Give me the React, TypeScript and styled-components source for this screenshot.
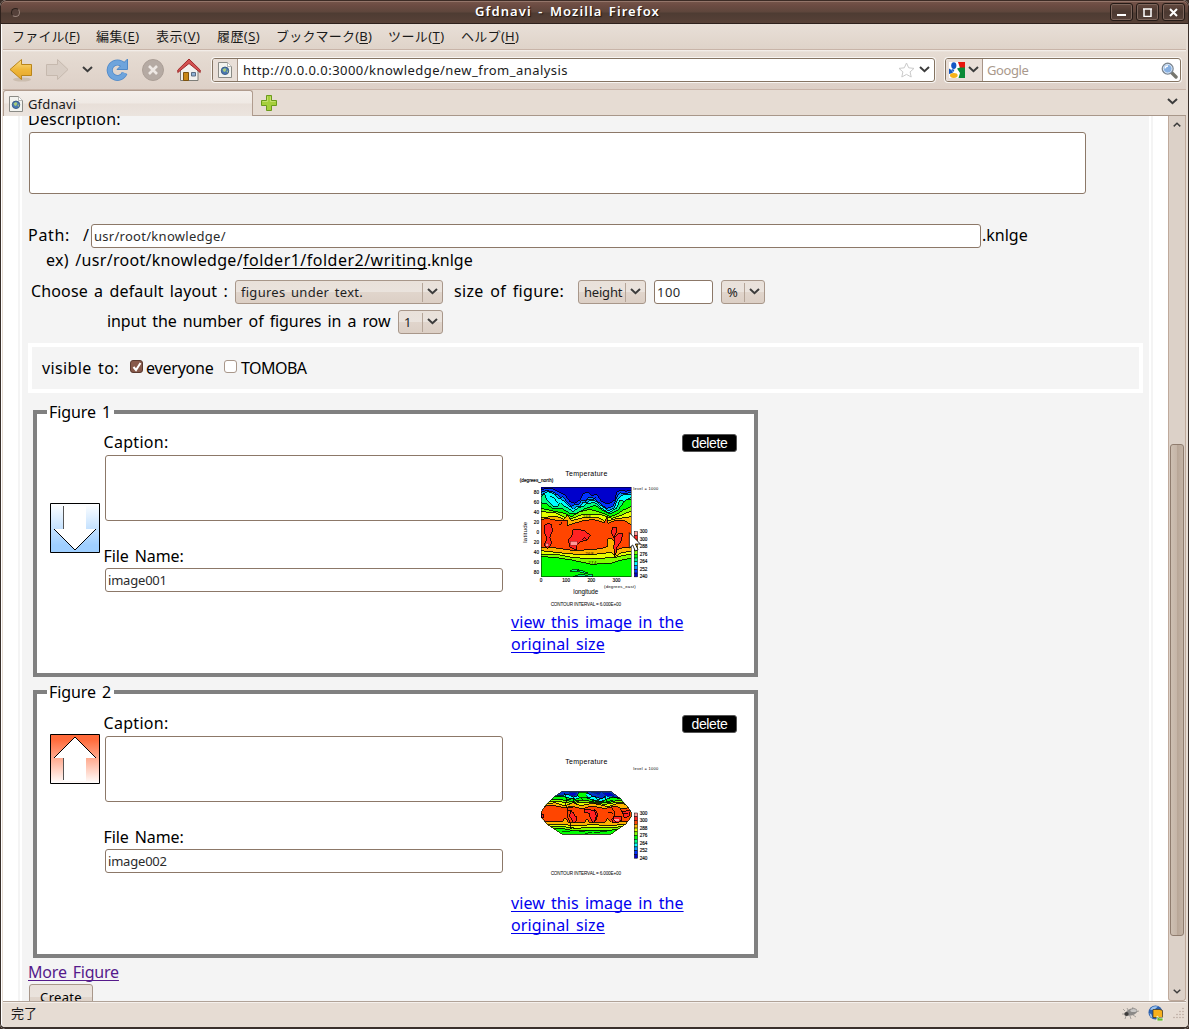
import React from "react";
import styled, { createGlobalStyle, css } from "styled-components";

const Global = createGlobalStyle`
  * { box-sizing: border-box; }
  body { margin: 0; background: #3a2d27; font-family: "Noto Sans", "Noto Sans CJK JP", sans-serif; }
`;

const FONT = '"Noto Sans", "Noto Sans CJK JP", sans-serif';

/* ---------- window frame ---------- */

const Frame = styled.div`
  width: 1189px;
  height: 1029px;
  display: flex;
  flex-direction: column;
  overflow: hidden;
  background: #e6dcd3;
  border-radius: 6px 6px 5px 5px;
  font-family: ${FONT};
  color: #1a1a1a;
`;

const TitleBar = styled.header`
  height: 24px;
  flex: none;
  display: grid;
  grid-template-columns: 26px 1fr 77px;
  align-items: center;
  padding: 0 3px 0 0;
  background: linear-gradient(#76564b 0, #6d4c43 4px, #5e463c 11px, #4e3c33 12px, #574137 22px);
  border: 1px solid #2e211c;
  border-top-color: #3c2b25;
  box-shadow: inset 0 1px 0 #94756a;
  border-radius: 6px 6px 0 0;
`;

const TitleDot = styled.i`
  width: 9px;
  height: 9px;
  margin-left: 10px;
  border-radius: 50%;
  background: #55413a;
  border: 1px solid #2c201b;
  border-right-color: #98847b;
  border-bottom-color: #98847b;
`;

const TitleText = styled.h1`
  margin: 0 0 2px;
  text-align: center;
  font-size: 13px;
  font-weight: 600;
  line-height: 18px;
  letter-spacing: 1.08px;
  word-spacing: 2px;
  color: #fff;
  text-shadow: 1px 1px 1px #1c120e;
`;

const WindowButtons = styled.div`
  display: flex;
  justify-content: flex-end;
  gap: 3px;
`;

const WindowButton = styled.button`
  width: 23px;
  height: 18px;
  padding: 0;
  display: grid;
  place-items: center;
  background: linear-gradient(#65493f, #4b3931 50%, #57423a);
  border: 1px solid #241a16;
  box-shadow: inset 0 0 0 1px #7d665c;
  border-radius: 3px;
`;

const Body = styled.div`
  flex: 1;
  min-height: 0;
  display: flex;
  flex-direction: column;
  border: solid #3a302b;
  border-width: 0 1px 2px 1px;
  border-radius: 0 0 5px 5px;
  box-shadow: inset 1px 0 0 #fff;
  padding: 0 2px 0 2px;
`;

/* ---------- browser chrome ---------- */

const MenuBar = styled.nav`
  height: 26px;
  flex: none;
  display: flex;
  align-items: center;
  gap: 16px;
  padding: 0 9px 1px;
  background: linear-gradient(#e8dfd7, #dfd3c9);
  border-bottom: 1px solid #c8b4a8;
`;

const MenuItem = styled.span<{ $w: number; $ls: number }>`
  width: ${(p) => p.$w}px;
  letter-spacing: ${(p) => p.$ls}px;
  font-size: 13px;
  line-height: 20px;
  white-space: nowrap;
  u { text-underline-offset: 2px; }
`;

const ToolBar = styled.div`
  height: 40px;
  flex: none;
  display: flex;
  align-items: center;
  padding: 1px 3px 0 6px;
  background: linear-gradient(#f6f2ee 0, #e6dcd3 2px, #ddd0c7);
  border-bottom: 1px solid #c8b4a8;
`;

const ToolSlot = styled.span<{ $w: number }>`
  width: ${(p) => p.$w}px;
  display: flex;
  align-items: center;
`;

const UrlBox = styled.div<{ $w: number; $ml?: number }>`
  width: ${(p) => p.$w}px;
  height: 24px;
  margin-left: ${(p) => p.$ml ?? 0}px;
  display: flex;
  align-items: center;
  overflow: hidden;
  background: #fff;
  border: 1px solid #857462;
  border-radius: 3px;
  box-shadow: 0 0 0 1px #f8f5f2;
`;

const UrlBadge = styled.span<{ $w: number }>`
  width: ${(p) => p.$w}px;
  height: 100%;
  flex: none;
  display: flex;
  align-items: center;
  justify-content: center;
  gap: 3px;
  background: #e9dfd8;
  border-right: 1px solid #a89588;
`;

const Grow = styled.span`
  flex: 1;
`;

const TabBar = styled.div`
  height: 26px;
  flex: none;
  display: flex;
  align-items: center;
  padding: 0 8px 1px 0;
  background: #e6dcd3;
  border-bottom: 1px solid #a8978a;
`;

const Tab = styled.div`
  width: 250px;
  height: 26px;
  flex: none;
  align-self: flex-start;
  display: flex;
  align-items: center;
  gap: 5px;
  padding: 0 5px;
  background: linear-gradient(#f4efeb 0, #efe9e4 12px, #e8dfd8 13px, #ebe4de);
  border: 1px solid #b09c8e;
  border-bottom: 0;
  border-radius: 3px 3px 0 0;
`;

const NewTab = styled.span`
  margin-left: 8px;
  height: 16px;
`;

const StatusBar = styled.footer`
  height: 26px;
  flex: none;
  display: flex;
  align-items: center;
  gap: 9px;
  padding: 0 1px 3px 8px;
  background: #e6dcd3;
  border-top: 1px solid #b0a297;
  box-shadow: inset 0 1px 0 #f5f0ec;
`;

/* ---------- scroll area ---------- */

const View = styled.div`
  flex: 1;
  min-height: 0;
  display: flex;
  background: #fff;
`;

const Gutter = styled.div<{ $side: "left" | "right" }>`
  width: 19px;
  flex: none;
  display: flex;
  justify-content: ${(p) => (p.$side === "left" ? "flex-end" : "flex-start")};
  padding: 0 2px;
  &::after { content: ""; width: 2px; background: #f4f4f4; }
`;

const Page = styled.main`
  flex: 1;
  min-width: 0;
  overflow: hidden;
  background: #f4f4f4;
  padding-left: 6px;
  color: #000;
`;

const ScrollBar = styled.div`
  width: 18px;
  flex: none;
  display: flex;
  flex-direction: column;
  align-items: center;
  background: #dcd1c8;
  border: 1px solid #bfaa9c;
  border-top: 0;
  border-radius: 0 0 3px 3px;
`;

const ScrollStep = styled.span`
  height: 17px;
  width: 16px;
  display: grid;
  place-items: center;
`;

const Thumb = styled.div`
  width: 14px;
  height: 492px;
  margin-top: 311px;
  margin-bottom: auto;
  background: linear-gradient(90deg, #cdbfb2, #c5b5a7 50%, #b8a697 51%, #c3b3a5);
  border: 1px solid #8f7c6e;
  border-radius: 3px;
`;

/* ---------- text and form parts ---------- */

const Text = styled.span<{ $ls?: number; $ws?: number; $w?: number; $size?: number; $color?: string; $pad?: number }>`
  display: inline-block;
  flex: none;
  ${(p) => p.$w !== undefined && css`width: ${p.$w}px;`}
  font-family: ${FONT};
  font-size: ${(p) => p.$size ?? 16}px;
  line-height: 22px;
  letter-spacing: ${(p) => p.$ls ?? 0}px;
  word-spacing: ${(p) => p.$ws ?? 2}px;
  padding-left: ${(p) => p.$pad ?? 0}px;
  color: ${(p) => p.$color ?? "inherit"};
  white-space: nowrap;
`;

const Underlined = styled(Text)`
  text-decoration: underline;
  text-decoration-skip-ink: none;
  text-decoration-thickness: 1px;
  text-underline-offset: 2px;
`;

const Row = styled.div<{ $h: number; $pl?: number; $mt?: number }>`
  height: ${(p) => p.$h}px;
  margin-top: ${(p) => p.$mt ?? 0}px;
  padding-left: ${(p) => p.$pl ?? 0}px;
  display: flex;
  align-items: center;
  > span { margin-bottom: 2px; }
`;

const fieldLook = css`
  display: block;
  flex: none;
  margin: 0;
  background: #fff;
  border: 1px solid #8c7868;
  border-radius: 3px;
  outline: none;
  resize: none;
  font-family: ${FONT};
  font-size: 13px;
  color: #2b2b2b;
`;

const Area = styled.textarea<{ $w: number; $h: number }>`
  ${fieldLook}
  width: ${(p) => p.$w}px;
  height: ${(p) => p.$h}px;
`;

const Input = styled.input<{ $w: number; $ls?: number }>`
  ${fieldLook}
  width: ${(p) => p.$w}px;
  height: 24px;
  padding: 0 2px 1px;
  letter-spacing: ${(p) => p.$ls ?? 0}px;
`;

const raised = css`
  background: linear-gradient(#e9e1da 0, #eae3dd 50%, #e0d5cc 52%, #dccfc5 100%);
  border: 1px solid #a8978a;
  border-radius: 3px;
`;

const SelectBox = styled.div<{ $w: number; $ml: number }>`
  ${raised}
  width: ${(p) => p.$w}px;
  height: 24px;
  margin-left: ${(p) => p.$ml}px;
  padding-left: 5px;
  flex: none;
  display: flex;
  align-items: center;
  justify-content: space-between;
  color: #1f1f1f;
`;

const SelectArrow = styled.span`
  width: 20px;
  height: 19px;
  display: grid;
  place-items: center;
  border-left: 1px solid #b5a598;
`;

const VisibleBox = styled.div`
  width: 1115px;
  height: 50px;
  margin-top: 9px;
  border: 4px solid #fff;
  padding-left: 10px;
  display: flex;
  align-items: center;
`;

const Check = styled.span<{ $on?: boolean; $ml: number }>`
  width: 13px;
  height: 13px;
  margin: 0 3px 3px ${(p) => p.$ml}px;
  display: grid;
  place-items: center;
  background: ${(p) => (p.$on ? "#87594a" : "#fff")};
  border: 1px solid ${(p) => (p.$on ? "#5b3a30" : "#a8978a")};
  border-radius: 3px;
`;

const FigureSet = styled.fieldset<{ $h: number; $mt: number }>`
  width: 725px;
  height: ${(p) => p.$h}px;
  margin: ${(p) => p.$mt}px 0 0 5px;
  padding: 0 17px 0 10px;
  min-width: 0;
  border: 4px solid #808080;
  background: #fff;
  legend { padding: 0 2px; height: 22px; width: 67px; line-height: 22px; display: flex; }
`;

const FigureGrid = styled.div<{ $pt: number }>`
  display: grid;
  grid-template-columns: 50px 398px 1fr;
  column-gap: 5px;
  padding: ${(p) => p.$pt}px 0 0 3px;
`;

const ArrowSlot = styled.div<{ $mt: number }>`
  margin-top: ${(p) => p.$mt}px;
  height: 50px;
`;

const FieldColumn = styled.div`
  display: flex;
  flex-direction: column;
  padding-top: 8px;
  ${Text} { margin-left: -1.5px; }
`;

const Space = styled.div<{ $h: number }>`
  height: ${(p) => p.$h}px;
`;

const PlotColumn = styled.div`
  display: flex;
  flex-direction: column;
  padding: 11px 0 0 3px;
`;

const DeleteButton = styled.button`
  align-self: flex-end;
  width: 55px;
  height: 18px;
  padding: 1px 0 0;
  background: #000;
  color: #fff;
  border: 1px solid #555;
  border-radius: 3px;
  font: 14px/15px "Liberation Sans", Arial, sans-serif;
  letter-spacing: -0.35px;
`;

const PlotSlot = styled.div`
  height: 150px;
  margin-top: 8px;
`;

const PlotLink = styled.a`
  display: flex;
  flex-direction: column;
  margin-top: 1px;
  color: #0000ee;
`;

const CreateButton = styled.button`
  ${raised}
  width: 64px;
  height: 25px;
  margin: 0 0 0 1px;
  padding: 0;
  display: block;
  text-align: center;
`;

/* ---------- icons ---------- */

const Chevron = ({ w = 11, c = "#3c3c3c", up = false }: { w?: number; c?: string; up?: boolean }) => (
  <svg width={w} height={w * 0.64} viewBox="0 0 11 7">
    <path d={up ? "M1 6 5.5 1.8 10 6" : "M1 1 5.5 5.2 10 1"} fill="none" stroke={c} strokeWidth="2" />
  </svg>
);

const PageIcon = () => (
  <svg width="14" height="16" viewBox="0 0 14 16">
    <path d="M.5.5h9l4 4v11H.5z" fill="#f3f3ef" stroke="#8b8b86" />
    <path d="M9.5.5v4h4" fill="#fff" stroke="#a5a5a0" strokeWidth=".8" />
    <circle cx="7" cy="8.8" r="3.8" fill="#4a78b4" stroke="#2f5078" strokeWidth=".8" />
    <path d="M4.500 7.500 7 6l1.500 1.500L7 10 5.500 9.500zM8.500 9l1.700-.4-.8 2.400z" fill="#a9cc78" />
  </svg>
);

const ArrowIcon = ({ back }: { back?: boolean }) => (
  <svg width="24" height="24" viewBox="0 0 24 24">
    <defs>
      <linearGradient id="gold" x2="0" y2="1">
        <stop offset="0" stopColor="#fbe08a" />
        <stop offset=".5" stopColor="#efb73a" />
        <stop offset="1" stopColor="#e5a52a" />
      </linearGradient>
    </defs>
    {back && <ellipse cx="13" cy="21.500" rx="9" ry="2" fill="#b8a793" opacity=".5" />}
    <path
      d={back ? "M1 11.500 12.500 1.500v5h10v11h-10v4z" : "M23 11.500 12.500 1.500v5h-11v11h11v4z"}
      fill={back ? "url(#gold)" : "#d8cdc4"}
      stroke={back ? "#b9851a" : "#c6b9ae"}
      strokeLinejoin="round"
    />
  </svg>
);

const ReloadIcon = () => (
  <svg width="23" height="24" viewBox="0 0 23 24">
    <path d="M17.300 7.200A7.700 7.700 0 1 0 18.600 15" fill="none" stroke="#5089c8" strokeWidth="6" />
    <path d="M21.500 1v10.500H11l4-4z" fill="#6ea4dc" stroke="#5089c8" strokeLinejoin="round" />
    <path d="M17.300 7.200A7.700 7.700 0 1 0 18.600 15" fill="none" stroke="#6ea4dc" strokeWidth="4.400" />
  </svg>
);

const StopIcon = () => (
  <svg width="22" height="22" viewBox="0 0 22 22">
    <circle cx="11" cy="11" r="10.500" fill="#b5aaa3" stroke="#aa9e96" />
    <path d="m7 7 8 8m0-8-8 8" stroke="#eee8e4" strokeWidth="2.600" />
  </svg>
);

const HomeIcon = () => (
  <svg width="24" height="24" viewBox="0 0 24 24">
    <path d="M3.500 11v11.500h17.500V11l-9-7z" fill="#f2f1ee" stroke="#7d7d78" />
    <path d="M12 1 .8 12v2.500L12 5.500l11.200 9V12z" fill="#d35151" stroke="#a02c2c" strokeLinejoin="round" />
    <path d="M6.500 14.500h5v8h-5z" fill="#c98818" stroke="#7c5410" />
    <path d="M14.500 14.500h4v3.500h-4z" fill="#8fb2d6" stroke="#5a6e84" />
  </svg>
);

const StarIcon = () => (
  <svg width="17" height="16" viewBox="0 0 17 16">
    <path d="m8.500 1 2.200 4.800 5.300.6-3.900 3.500 1.100 5.100-4.700-2.600L3.800 15l1.100-5.100L1 6.400l5.300-.6z" fill="#fff" stroke="#c9c9c9" strokeLinejoin="round" />
  </svg>
);

const GoogleIcon = () => (
  <svg width="16" height="16" viewBox="0 0 16 16">
    <path d="M0 0h16v16H0z" fill="#fff" />
    <path d="M9 0h7v6H11z" fill="#e8150c" />
    <path d="M8 6.500 11 5.500h5V16H9.500l1.500-5z" fill="#0b8a36" />
    <path d="M0 6.500 2.500 8 4 10.500l-2 1L0 12z" fill="#1357c4" />
    <path d="m2.500 7 3 .8L4 10.500z" fill="#1357c4" />
    <ellipse cx="4.800" cy="3.600" rx="2.600" ry="3.400" fill="#1357c4" />
    <ellipse cx="4.800" cy="13.500" rx="3.800" ry="2.400" fill="#f6b31a" />
  </svg>
);

const SearchIcon = () => (
  <svg width="17" height="17" viewBox="0 0 17 17">
    <path d="m10 10 5 5" stroke="#77776f" strokeWidth="3.400" strokeLinecap="round" />
    <circle cx="6.700" cy="6.700" r="5.400" fill="#87b0e2" stroke="#7e8790" strokeWidth="1.400" />
    <circle cx="6.700" cy="6.700" r="4.300" fill="none" stroke="#dfeaf7" />
    <path d="M4 6.500A3 3 0 0 1 7 4" fill="none" stroke="#fff" strokeWidth="1.300" />
  </svg>
);

const PlusIcon = () => (
  <svg width="16" height="16" viewBox="0 0 16 16">
    <path d="M5.500.5h5v5h5v5h-5v5h-5v-5h-5v-5h5z" fill="#a5cf3c" stroke="#6b9a1c" strokeLinejoin="round" />
    <path d="M6.500 1.500v5h-5M9.500 1.500v5h5" fill="none" stroke="#c3e06a" />
  </svg>
);

const BugIcon = () => (
  <svg width="17" height="14" viewBox="0 0 17 14">
    <path d="M3 5 1 3m2 5H0m4 2-1 3m5-3 1 3m2-4 3 2M6 4 5 2m5 2 1-3m2 5 4-1" stroke="#94908c" strokeWidth=".8" fill="none" />
    <ellipse cx="9.500" cy="6" rx="6" ry="3.500" transform="rotate(-18 9.500 6)" fill="#8b8987" />
    <ellipse cx="11.500" cy="4.500" rx="3.200" ry="1.600" fill="#c8c6c4" />
    <ellipse cx="4.500" cy="8" rx="2.200" ry="2" fill="#3d3b3a" />
  </svg>
);

const GlobeIcon = () => (
  <svg width="16" height="16" viewBox="0 0 16 16">
    <circle cx="7.500" cy="7.500" r="7" fill="#2a5fae" />
    <path d="M2 4.500Q5 0 10 1.500L7 4 4 5zM1.500 8 3.500 9.500l1 3.500-2-1z" fill="#9cc4ee" />
    <path d="M5 4.500h7l2.500 1v7H5z" fill="#f6b01c" stroke="#3b3322" strokeWidth=".7" />
    <path d="m9 11 2.500 2H15v3H9z" fill="#67b52c" stroke="#fff" strokeWidth=".7" />
  </svg>
);

const Grip = () => (
  <svg width="12" height="12" viewBox="0 0 12 12" fill="#b9aa9e">
    {[[10, 2], [7, 5], [10, 5], [4, 8], [7, 8], [10, 8], [1, 11], [4, 11], [7, 11], [10, 11]].map(([x, y]) => (
      <circle key={`${x}-${y}`} cx={x} cy={y - 0.5} r=".8" />
    ))}
  </svg>
);

const MoveIcon = ({ up }: { up?: boolean }) => {
  const id = up ? "moveUp" : "moveDown";
  return (
    <svg width="50" height="50" viewBox="0 0 50 50">
      <defs>
        <linearGradient id={id} x2="0" y2="1">
          <stop offset={up ? 0.1 : 0} stopColor={up ? "#ff6a3a" : "#fff"} />
          <stop offset={up ? 1 : 0.85} stopColor={up ? "#fff" : "#9fcfff"} />
        </linearGradient>
      </defs>
      <path d="M.5.5h49v49H.5z" fill={`url(#${id})`} stroke="#000" />
      {up ? (
        <g>
          <path d="M13.500 46V24H4L25 3l21 21H36v23H13z" fill="#fff" />
          <path d="M4 24 25 3l21 21" fill="none" stroke="#000" />
          <path d="M13.500 24v22" stroke="#555" />
        </g>
      ) : (
        <g>
          <path d="M13.500 3H36v23h10L25 47 4 26h9.500z" fill="#fff" />
          <path d="M4 26 25 47l21-21" fill="none" stroke="#000" />
          <path d="M13.500 3v23" stroke="#555" />
        </g>
      )}
    </svg>
  );
};

/* ---------- temperature plots ---------- */

const BANDS: [string, string][] = [
  ["#0033ff", "108,88 140,84 160,95 180,105 195,125 210,130 225,120 235,100 250,97 262,108 275,102 290,125 310,132 330,120 335,96 350,90 362,94 378,90"],
  ["#0099ff", "108,97 125,91 150,98 165,112 175,110 185,125 200,140 210,132 220,136 230,120 240,122 250,112 265,114 275,122 285,130 305,146 325,138 335,112 345,98 360,102 378,96"],
  ["#00ffff", "108,104 130,95 150,103 158,114 170,118 190,135 205,148 215,138 225,141 235,126 245,128 258,118 270,122 290,138 310,152 328,143 338,118 355,103 378,105"],
  ["#00ff80", "108,112 118,98 124,118 145,140 158,138 166,128 176,138 190,145 205,156 220,142 235,140 245,130 270,128 290,145 310,158 335,145 345,120 358,124 378,112"],
  ["#00ff00", "108,128 125,132 145,147 170,145 195,160 215,160 240,146 270,136 295,152 315,162 340,150 350,135 362,120 378,118"],
  ["#80ff00", "108,145 140,152 180,160 200,170 225,155 255,148 290,158 318,170 340,160 355,150 378,140"],
  ["#e6ff00", "108,155 150,158 180,172 200,176 230,164 290,165 320,175 350,165 378,153"],
  ["#ffb300", "108,174 150,168 178,178 186,165 200,182 230,174 280,173 300,184 325,178 378,170"],
  ["#ff4500", "108,180 125,175 150,180 186,180 186,197 230,183 265,178 297,188 306,172 308,190 335,180 360,182 378,195"],
  ["#ffb300", "108,262 140,262 180,268 210,272 290,266 306,260 308,238 318,234 328,243 328,288 335,270 350,264 378,262"],
  ["#e6ff00", "108,272 180,280 240,285 300,280 318,276 330,290 350,278 378,274"],
  ["#80ff00", "108,282 160,284 200,292 250,296 300,294 330,292 378,282"],
  ["#00ff00", "108,290 150,292 200,300 260,313 320,309 350,300 378,295"],
];

const HOT = [
  "118,196 128,190 140,194 142,215 134,232 140,250 128,266 118,255 126,235 117,215",
  "190,240 202,225 203,210 220,208 240,213 256,226 246,240 224,246 214,258 216,270 195,262",
  "322,203 335,203 334,215 328,232 340,222 352,220 350,240 336,262 332,286 326,262 330,240 320,220",
];

const SCALE = ["#ff9999", "#ff2222", "#ff4500", "#ffb300", "#e6ff00", "#80ff00", "#00ff00", "#00ff80", "#00ffff", "#0099ff", "#0033ff", "#0000cc"];

const PlotText = styled.text<{ $s: number }>`
  font-family: "Liberation Sans", Arial, sans-serif;
  font-size: ${(p) => p.$s}px;
  fill: #000;
`;

const Scale = ({ y }: { y: number }) => (
  <g>
    {SCALE.map((c, i) => (
      <rect key={c} x="388" y={y + i * 11.3} width="10" height="11.3" fill={c} stroke="#000" strokeWidth="1.500" />
    ))}
    {["300", "300", "288", "276", "264", "252", "240"].map((t, i) => (
      <PlotText key={i} $s={14} x="404" y={y + 5 + i * 22.500} textLength="23" stroke="#000" strokeWidth=".4">{t}</PlotText>
    ))}
  </g>
);

const Cursor = () => (
  <path d="M373 218v46l10-9 8 18 8-4-8-17h15z" fill="#fff" stroke="#000" strokeWidth="2.500" />
);

const FlatPlot = () => (
  <svg width="170" height="150" viewBox="18 0 510 450">
    <PlotText $s={21} x="181" y="49" textLength="126">Temperature</PlotText>
    <PlotText $s={14} x="44" y="66" textLength="101" stroke="#000" strokeWidth=".4">(degrees_north)</PlotText>
    <PlotText $s={12} x="385" y="89" textLength="75">level = 1000</PlotText>
    <g shapeRendering="crispEdges">
      <rect x="108" y="82" width="270" height="268" fill="#0000cc" />
      {BANDS.map(([c, pts], i) => (
        <g key={i}>
          <polygon points={`${pts} 378,350 108,350`} fill={c} />
          <polyline points={pts} fill="none" stroke="#000" strokeWidth="2.500" />
        </g>
      ))}
      {HOT.map((pts) => (
        <polygon key={pts} points={pts} fill="#ff2222" stroke="#000" strokeWidth="2.500" />
      ))}
      <path d="M196 244h20v12h-20zM122 250h9v8h-9z" fill="#ff9999" stroke="#b02020" strokeWidth="2" />
      <path d="M196 333l12-6h14l-6 6 16-1 18 8-14-1-12-3zM205 350l20-7 22 3 14-4 3 8z" fill="#00ff80" stroke="#000" strokeWidth="2" />
      <path d="M162 192h6v-5M232 240l6-7 8 5M240 125l10-8 12 6 10-12M135 108l14 8 10 14" fill="none" stroke="#000" strokeWidth="2.500" />
      <rect x="108" y="82" width="270" height="268" fill="none" stroke="#000" strokeWidth="1.500" />
    </g>
    <PlotText $s={13} x="233" y="173" textLength="24">268</PlotText>
    <PlotText $s={13} x="241" y="284" textLength="24">268</PlotText>
    <PlotText $s={13} x="250" y="313" textLength="24">274</PlotText>
    {["80", "60", "40", "20", "0", "20", "40", "60", "80"].map((t, i) => (
      <PlotText key={i} $s={14} x="102" y={102 + i * 29.900} textAnchor="end" stroke="#000" strokeWidth=".4">{t}</PlotText>
    ))}
    {["0", "100", "200", "300"].map((t, i) => (
      <PlotText key={t} $s={14} x={108 + i * 75.500} y="367" textAnchor="middle" stroke="#000" strokeWidth=".4">{t}</PlotText>
    ))}
    <PlotText $s={13} x="297" y="383" textLength="95">(degrees_east)</PlotText>
    <PlotText $s={19} x="205" y="403" textLength="75">longitude</PlotText>
    <PlotText $s={18} x="0" y="0" textLength="62" transform="translate(66 248) rotate(-90)">latitude</PlotText>
    <PlotText $s={14} x="137" y="437" textLength="211">CONTOUR INTERVAL = 6.000E+00</PlotText>
    <Scale y={215} />
    <Cursor />
  </svg>
);

const GLOBE = "172,124 317,124 345,145 368,170 379,188 379,200 362,222 317,253 172,253 130,225 108,202 108,188 122,165 148,140";

const GLOBE_BANDS: [string, string][] = [
  ["#00ffff", "100,128 165,136 190,134 205,142 225,134 245,128 262,138 290,146 310,134 330,142 380,150"],
  ["#00ff00", "100,138 160,138 185,142 210,148 235,140 262,150 290,154 320,142 380,150"],
  ["#80ff00", "100,150 160,148 200,154 240,150 270,157 310,158 340,150 380,155"],
  ["#e6ff00", "100,158 150,153 200,160 250,157 300,163 340,156 380,160"],
  ["#ffb300", "100,165 150,158 180,168 205,158 225,167 265,160 310,170 340,160 380,165"],
  ["#ff4500", "100,172 140,165 182,174 205,170 232,176 260,168 300,176 330,168 350,176 380,172"],
  ["#ffb300", "100,216 172,215 180,204 190,216 240,217 246,206 252,216 300,217 308,205 320,217 380,214"],
  ["#e6ff00", "100,224 170,222 210,228 260,224 320,227 380,220"],
  ["#80ff00", "100,230 170,229 210,235 265,232 320,233 380,227"],
  ["#00ff00", "100,237 170,235 210,243 270,240 320,240 380,234"],
];

const GlobePlot = () => (
  <svg width="170" height="150" viewBox="18 -27 510 450">
    <defs>
      <clipPath id="globe"><polygon points={GLOBE} /></clipPath>
    </defs>
    <PlotText $s={21} x="181" y="41" textLength="126">Temperature</PlotText>
    <PlotText $s={12} x="385" y="61" textLength="75">level = 1000</PlotText>
    <g clipPath="url(#globe)" shapeRendering="crispEdges">
      <rect x="100" y="120" width="290" height="140" fill="#0033cc" />
      {GLOBE_BANDS.map(([c, pts], i) => (
        <g key={i}>
          <polygon points={`${pts} 380,260 100,260`} fill={c} />
          <polyline points={pts} fill="none" stroke="#000" strokeWidth="2.500" />
        </g>
      ))}
      <path d="M196 184l10 4 4 10 6 2-2 12-8 8-6-12-6-10zM238 178l20 2 14 0 6 14-4 14-10 12-8-16-4-14-14-4zM320 208l12-10 16 0 2 12-10 8-16 0zM352 184l24-2-4 16-14 6zM108 190l8 4v8l-8 2z" fill="#ff2222" stroke="#000" strokeWidth="2.500" />
      <path d="M328 208h14v6h-14z" fill="#ff9999" />
      <path d="M178 130l8 18-6 14 8 14-2 20 10 24 2 18 8-8M190 168l14 6M186 150l22-6-4 14 18-4M240 132l8 12 18-6 12 12 22-8 6 14 18-6M262 148l14 8 22-2M300 130l14 12M318 172l12 14-6 22 10 10M345 176l8 14 16 2M268 178l6 20-6 18M220 140l14 8M205 230l6 8M188 180l12 2M310 186l14 4" fill="none" stroke="#000" strokeWidth="2.500" />
      <path d="M195 126h20l-4 10-18 2zM258 126h30l-6 8zM292 128h22l14 10-20 2z" fill="#0000cc" stroke="#003366" strokeWidth="2" />
      <path d="M222 126h28l-8 8 6 8-24 2-6-8z" fill="#00ff00" stroke="#000" strokeWidth="2" />
      <path d="M172 246l30-4m20 4 24-4m20 6 40-4M240 250l20-2" fill="none" stroke="#000" strokeWidth="2" />
    </g>
    <polygon points={GLOBE} fill="none" stroke="#000" strokeWidth="2" shapeRendering="crispEdges" />
    <Scale y={189} />
    <PlotText $s={14} x="137" y="374" textLength="211">CONTOUR INTERVAL = 6.000E+00</PlotText>
  </svg>
);

/* ---------- composed parts ---------- */

const MENU: [string, string, number, number][] = [
  ["ファイル", "F", 68, 0.2],
  ["編集", "E", 44, 0.5],
  ["表示", "V", 45, 0.6],
  ["履歴", "S", 43, 0.4],
  ["ブックマーク", "B", 96, 0.2],
  ["ツール", "T", 57, 0.4],
  ["ヘルプ", "H", 58, 0.3],
];

const Select = ({ w, ml, ls = 0, children }: { w: number; ml: number; ls?: number; children: string }) => (
  <SelectBox $w={w} $ml={ml}>
    <Text $size={13} $ls={ls}>{children}</Text>
    <SelectArrow><Chevron /></SelectArrow>
  </SelectBox>
);

const Figure = ({ n, file, up, h, mt, pt }: { n: number; file: string; up?: boolean; h: number; mt: number; pt: number }) => (
  <FigureSet $h={h} $mt={mt}>
    <legend><Text $ls={-0.1}>Figure {n}</Text></legend>
    <FigureGrid $pt={pt}>
      <ArrowSlot $mt={up ? 30 : 80}><MoveIcon up={up} /></ArrowSlot>
      <FieldColumn>
        <Text $ls={0.3}>Caption:</Text>
        <Space $h={2} />
        <Area $w={398} $h={66} />
        <Space $h={24} />
        <Text $ls={-0.1}>File Name:</Text>
        <Space $h={1} />
        <Input $w={398} $ls={-0.2} defaultValue={file} />
      </FieldColumn>
      <PlotColumn>
        <DeleteButton>delete</DeleteButton>
        <PlotSlot>{up ? <GlobePlot /> : <FlatPlot />}</PlotSlot>
        <PlotLink>
          <Underlined $ls={0.06} $w={172}>view this image in the</Underlined>
          <Underlined $ls={0.15} $w={94}>original size</Underlined>
        </PlotLink>
      </PlotColumn>
    </FigureGrid>
  </FigureSet>
);

export default function App() {
  return (
    <Frame>
      <Global />
      <TitleBar>
        <TitleDot />
        <TitleText>Gfdnavi - Mozilla Firefox</TitleText>
        <WindowButtons>
          <WindowButton><svg width="9" height="9"><path d="M0 7h9" stroke="#fff" strokeWidth="2" /></svg></WindowButton>
          <WindowButton><svg width="9" height="9"><path d="M1 .5v8h7v-8M0 1h9" stroke="#fff" strokeWidth="1.500" fill="none" /></svg></WindowButton>
          <WindowButton><svg width="9" height="9"><path d="m1 1 7 7m0-7-7 7" stroke="#fff" strokeWidth="2" /></svg></WindowButton>
        </WindowButtons>
      </TitleBar>
      <Body>
        <MenuBar>
          {MENU.map(([label, key, w, ls]) => (
            <MenuItem key={key} $w={w} $ls={ls}>{label}(<u>{key}</u>)</MenuItem>
          ))}
        </MenuBar>
        <ToolBar>
          <ToolSlot $w={36}><ArrowIcon back /></ToolSlot>
          <ToolSlot $w={37}><ArrowIcon /></ToolSlot>
          <ToolSlot $w={24}><Chevron /></ToolSlot>
          <ToolSlot $w={36}><ReloadIcon /></ToolSlot>
          <ToolSlot $w={35}><StopIcon /></ToolSlot>
          <ToolSlot $w={35}><HomeIcon /></ToolSlot>
          <UrlBox $w={723}>
            <UrlBadge $w={25}><PageIcon /></UrlBadge>
            <Text $size={13} $ls={0.46} $pad={5}>http://0.0.0.0:3000/knowledge/new_from_analysis</Text>
            <Grow />
            <ToolSlot $w={21}><StarIcon /></ToolSlot>
            <ToolSlot $w={15}><Chevron /></ToolSlot>
          </UrlBox>
          <UrlBox $w={236} $ml={10}>
            <UrlBadge $w={37}><GoogleIcon /><Chevron /></UrlBadge>
            <Text $size={13} $ls={-0.4} $color="#a9998c" $pad={4}>Google</Text>
            <Grow />
            <ToolSlot $w={19}><SearchIcon /></ToolSlot>
          </UrlBox>
        </ToolBar>
        <TabBar>
          <Tab><PageIcon /><Text $size={13} $ls={0.15}>Gfdnavi</Text></Tab>
          <NewTab><PlusIcon /></NewTab>
          <Grow />
          <Chevron />
        </TabBar>
        <View>
          <Gutter $side="left" />
          <Page>
            <Row $h={22} $mt={-7}><Text $ls={0.2}>Description:</Text></Row>
            <Row $h={62} $mt={1} $pl={1}><Area $w={1057} $h={62} /></Row>
            <Row $h={24} $mt={30}>
              <Text $ls={0.7} $w={55}>Path:</Text>
              <Text $w={8}>/</Text>
              <Input $w={890} $ls={0.28} defaultValue="usr/root/knowledge/" />
              <Text $pad={1}>.knlge</Text>
            </Row>
            <Row $h={22} $mt={2} $pl={18}>
              <Text $ls={0.3} $w={197}>ex) /usr/root/knowledge/</Text>
              <Underlined $ls={0.49} $w={184}>folder1/folder2/writing</Underlined>
              <Text>.knlge</Text>
            </Row>
            <Row $h={24} $mt={8} $pl={3}>
              <Text $ls={0.13} $w={196}>Choose a default layout :</Text>
              <Select w={208} ml={8} ls={0.27}>figures under text.</Select>
              <Text $ls={0.35} $w={124} $pad={11}>size of figure:</Text>
              <Select w={68} ml={11} ls={-0.2}>height</Select>
              <Row $h={24} $pl={8}><Input $w={59} $ls={0.5} defaultValue="100" /></Row>
              <Select w={44} ml={8}>%</Select>
            </Row>
            <Row $h={24} $mt={6} $pl={79}>
              <Text $ls={-0.08} $w={284}>input the number of figures in a row</Text>
              <Select w={45} ml={7}>1</Select>
            </Row>
            <VisibleBox>
              <Text $ls={0.36} $w={77}>visible to:</Text>
              <Check $on $ml={11}>
                <svg width="10" height="10"><path d="m1.500 5 2.500 3 4.500-7" stroke="#fff" strokeWidth="2" fill="none" /></svg>
              </Check>
              <Text $ls={-0.2} $w={67}>everyone</Text>
              <Check $ml={11} />
              <Text $ls={-0.55} $pad={1}>TOMOBA</Text>
            </VisibleBox>
            <Figure n={1} file="image001" h={276} mt={8} pt={0} />
            <Figure n={2} file="image002" up h={277} mt={4} pt={1} />
            <Row $h={22} $mt={4}><Underlined $ls={-0.2} $color="#551a8b">More Figure</Underlined></Row>
            <CreateButton><Text $size={13} $ls={0.3}>Create</Text></CreateButton>
          </Page>
          <Gutter $side="right" />
          <ScrollBar>
            <ScrollStep><Chevron w={8} up /></ScrollStep>
            <Thumb />
            <ScrollStep><Chevron w={8} /></ScrollStep>
          </ScrollBar>
        </View>
        <StatusBar>
          <Text $size={13}>完了</Text>
          <Grow />
          <BugIcon />
          <GlobeIcon />
          <Grip />
        </StatusBar>
      </Body>
    </Frame>
  );
}
